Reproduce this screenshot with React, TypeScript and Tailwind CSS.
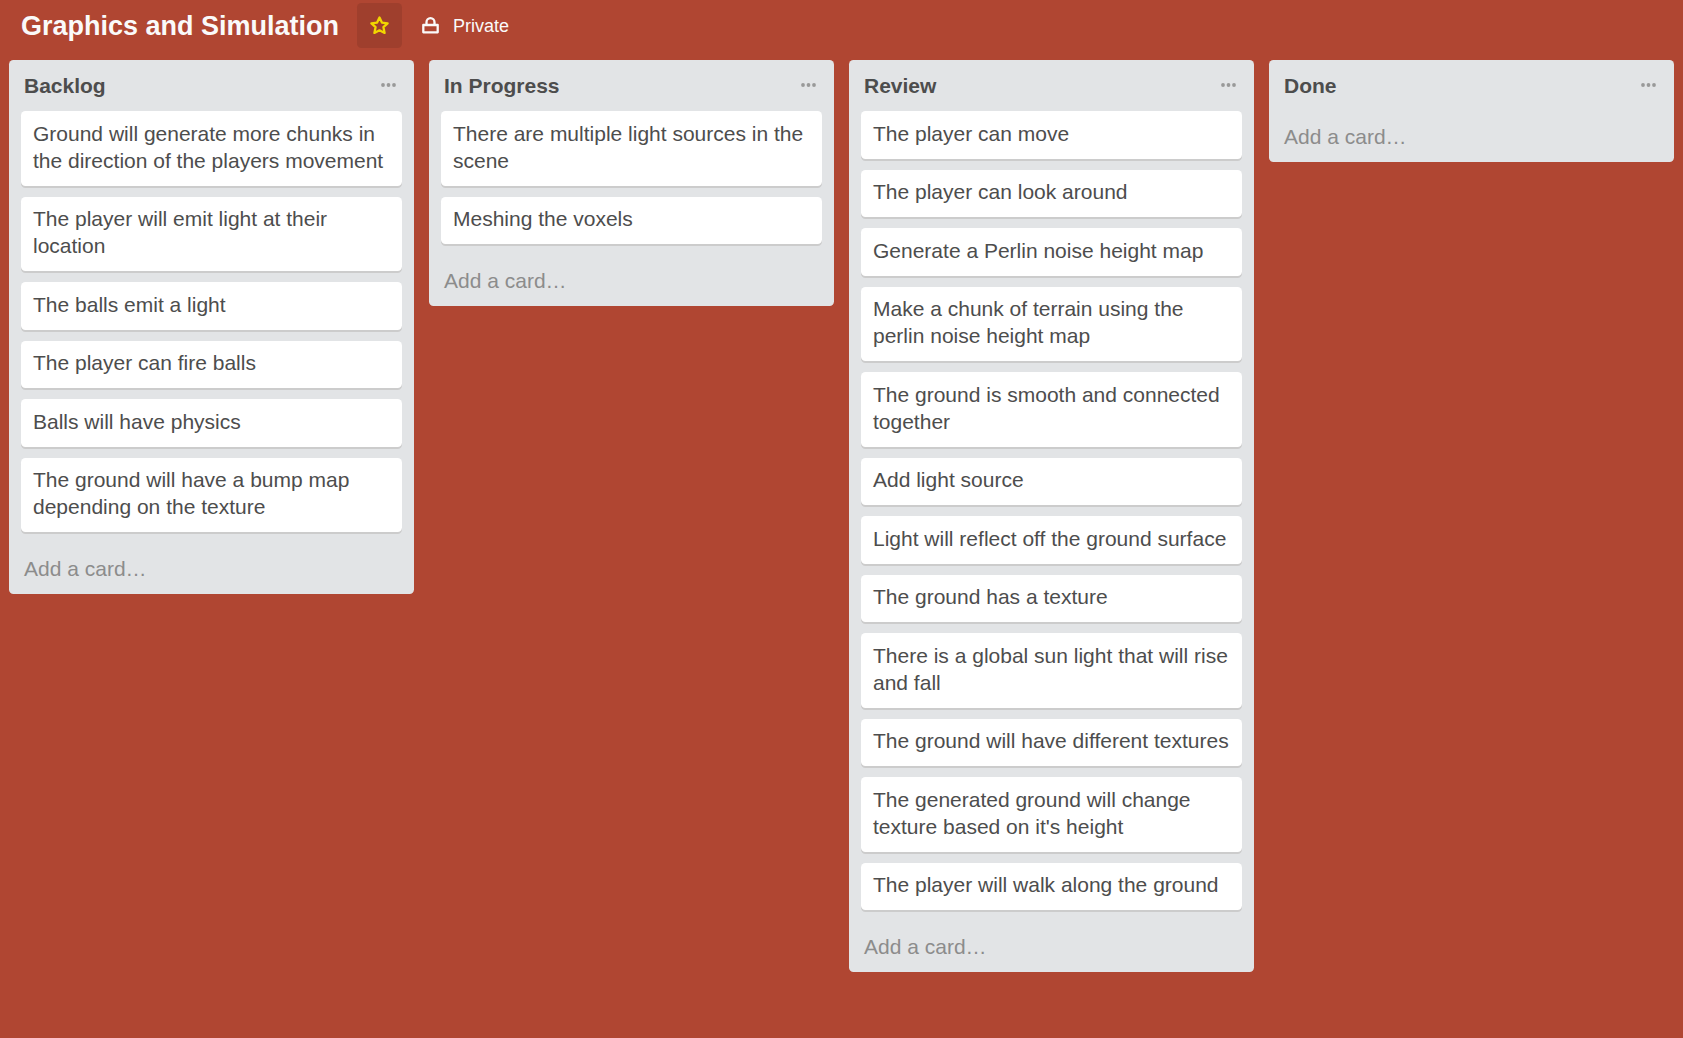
import React from "react";

type List = { title: string; cards: string[] };

const lists: List[] = [
  {
    title: "Backlog",
    cards: [
      "Ground will generate more chunks in the direction of the players movement",
      "The player will emit light at their location",
      "The balls emit a light",
      "The player can fire balls",
      "Balls will have physics",
      "The ground will have a bump map depending on the texture",
    ],
  },
  {
    title: "In Progress",
    cards: ["There are multiple light sources in the scene", "Meshing the voxels"],
  },
  {
    title: "Review",
    cards: [
      "The player can move",
      "The player can look around",
      "Generate a Perlin noise height map",
      "Make a chunk of terrain using the perlin noise height map",
      "The ground is smooth and connected together",
      "Add light source",
      "Light will reflect off the ground surface",
      "The ground has a texture",
      "There is a global sun light that will rise and fall",
      "The ground will have different textures",
      "The generated ground will change texture based on it's height",
      "The player will walk along the ground",
    ],
  },
  { title: "Done", cards: [] },
];

function StarIcon() {
  return (
    <svg className="size-[19px]" viewBox="0 0 19 19" fill="none" stroke="#f2d600" strokeWidth="2.3" strokeLinejoin="round">
      <path d="M9.500 1.500l2.400 5.100 5.700.7-4.200 3.800 1.200 5.800-5.100-2.600-5.100 2.600 1.200-5.800L1.400 7.300l5.700-.7z" />
    </svg>
  );
}

function LockIcon() {
  return (
    <svg className="h-[17px] w-[17px]" viewBox="0 0 17 17" fill="none" stroke="#fafafa" strokeWidth="2.300" strokeLinejoin="round">
      <path d="M1.300 8h14.400v7.300H1.300z" />
      <path d="M4.500 8V5.200a4 4 0 0 1 8 0V8" />
    </svg>
  );
}

function MenuDots() {
  return (
    <svg className="mt-[11px] h-[4px] w-[15px]" viewBox="0 0 15 4" fill="#999">
      <circle cx="2" cy="2" r="1.900" />
      <circle cx="7.500" cy="2" r="1.900" />
      <circle cx="13" cy="2" r="1.900" />
    </svg>
  );
}

function Column({ title, cards }: List) {
  return (
    <section className="w-[405px] shrink-0 rounded-[4.5px] bg-[#e2e4e6]">
      <header className="flex h-[51px] items-start justify-between pt-3 pr-[18px] pl-[15px]">
        <h2 className="text-[21px] leading-[27px] font-bold text-[#4d4d4d]">{title}</h2>
        <MenuDots />
      </header>
      <div className="px-3">
        {cards.map((card) => (
          <article
            key={card}
            className="mb-[10.72px] rounded-[4.5px] bg-white px-3 pt-[8.9px] pb-[11.9px] text-[21px] leading-[27px] text-[#4d4d4d] shadow-[0_2px_0_#ccc]"
          >
            {card}
          </article>
        ))}
      </div>
      <a className="block px-[15px] py-3 text-[21px] leading-[27px] text-[#8c8c8c]">Add a card…</a>
    </section>
  );
}

export default function App() {
  return (
    <main className="h-screen overflow-hidden bg-[#b04632] font-['Liberation_Sans',Arial,sans-serif]">
      <div className="flex h-[60px] items-start pt-[3px] pl-[21px] text-[#fafafa]">
        <h1 className="w-[336px] text-[27px] leading-[47px] font-bold whitespace-nowrap">Graphics and Simulation</h1>
        <button className="flex size-[45px] items-center justify-center rounded-[4.5px] bg-[#9f3f2d]">
          <StarIcon />
        </button>
        <div className="ml-5 flex h-[45px] items-center gap-[14px]">
          <LockIcon />
          <span className="pt-[2px] text-[18px] leading-[45px]">Private</span>
        </div>
      </div>
      <div className="flex items-start gap-[15px] pl-[9px]">
        {lists.map((list) => (
          <Column key={list.title} {...list} />
        ))}
      </div>
    </main>
  );
}
